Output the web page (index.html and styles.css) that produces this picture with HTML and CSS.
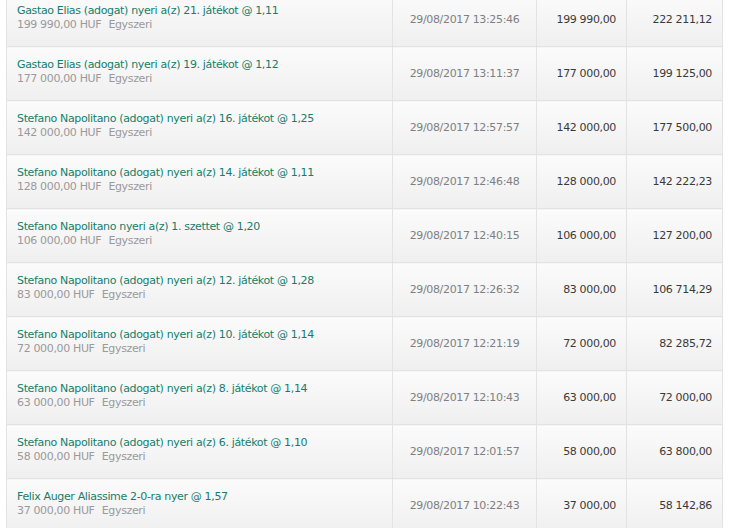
FILE: index.html
```html
<!DOCTYPE html>
<html lang="hu">
<head>
    <meta charset="UTF-8">
    <meta name="viewport" content="width=device-width, initial-scale=1.0">
    <title>Fogadások</title>
    <link rel="stylesheet" href="styles.css">
</head>
<body>
    <table class="bets">
        <colgroup>
            <col class="col-bet">
            <col class="col-date">
            <col class="col-stake">
            <col class="col-win">
        </colgroup>
        <tbody>
            <tr>
                <td class="bet">
                    <div class="bet-name">Gastao Elias (adogat) nyeri a(z) 21. játékot @ 1,11</div>
                    <div class="bet-info">199 990,00 HUF <span class="bet-type">Egyszeri</span></div>
                </td>
                <td class="date">29/08/2017 13:25:46</td>
                <td class="num">199 990,00</td>
                <td class="num">222 211,12</td>
            </tr>
            <tr>
                <td class="bet">
                    <div class="bet-name">Gastao Elias (adogat) nyeri a(z) 19. játékot @ 1,12</div>
                    <div class="bet-info">177 000,00 HUF <span class="bet-type">Egyszeri</span></div>
                </td>
                <td class="date">29/08/2017 13:11:37</td>
                <td class="num">177 000,00</td>
                <td class="num">199 125,00</td>
            </tr>
            <tr>
                <td class="bet">
                    <div class="bet-name">Stefano Napolitano (adogat) nyeri a(z) 16. játékot @ 1,25</div>
                    <div class="bet-info">142 000,00 HUF <span class="bet-type">Egyszeri</span></div>
                </td>
                <td class="date">29/08/2017 12:57:57</td>
                <td class="num">142 000,00</td>
                <td class="num">177 500,00</td>
            </tr>
            <tr>
                <td class="bet">
                    <div class="bet-name">Stefano Napolitano (adogat) nyeri a(z) 14. játékot @ 1,11</div>
                    <div class="bet-info">128 000,00 HUF <span class="bet-type">Egyszeri</span></div>
                </td>
                <td class="date">29/08/2017 12:46:48</td>
                <td class="num">128 000,00</td>
                <td class="num">142 222,23</td>
            </tr>
            <tr>
                <td class="bet">
                    <div class="bet-name">Stefano Napolitano nyeri a(z) 1. szettet @ 1,20</div>
                    <div class="bet-info">106 000,00 HUF <span class="bet-type">Egyszeri</span></div>
                </td>
                <td class="date">29/08/2017 12:40:15</td>
                <td class="num">106 000,00</td>
                <td class="num">127 200,00</td>
            </tr>
            <tr>
                <td class="bet">
                    <div class="bet-name">Stefano Napolitano (adogat) nyeri a(z) 12. játékot @ 1,28</div>
                    <div class="bet-info">83 000,00 HUF <span class="bet-type">Egyszeri</span></div>
                </td>
                <td class="date">29/08/2017 12:26:32</td>
                <td class="num">83 000,00</td>
                <td class="num">106 714,29</td>
            </tr>
            <tr>
                <td class="bet">
                    <div class="bet-name">Stefano Napolitano (adogat) nyeri a(z) 10. játékot @ 1,14</div>
                    <div class="bet-info">72 000,00 HUF <span class="bet-type">Egyszeri</span></div>
                </td>
                <td class="date">29/08/2017 12:21:19</td>
                <td class="num">72 000,00</td>
                <td class="num">82 285,72</td>
            </tr>
            <tr>
                <td class="bet">
                    <div class="bet-name">Stefano Napolitano (adogat) nyeri a(z) 8. játékot @ 1,14</div>
                    <div class="bet-info">63 000,00 HUF <span class="bet-type">Egyszeri</span></div>
                </td>
                <td class="date">29/08/2017 12:10:43</td>
                <td class="num">63 000,00</td>
                <td class="num">72 000,00</td>
            </tr>
            <tr>
                <td class="bet">
                    <div class="bet-name">Stefano Napolitano (adogat) nyeri a(z) 6. játékot @ 1,10</div>
                    <div class="bet-info">58 000,00 HUF <span class="bet-type">Egyszeri</span></div>
                </td>
                <td class="date">29/08/2017 12:01:57</td>
                <td class="num">58 000,00</td>
                <td class="num">63 800,00</td>
            </tr>
            <tr>
                <td class="bet">
                    <div class="bet-name">Felix Auger Aliassime 2-0-ra nyer @ 1,57</div>
                    <div class="bet-info">37 000,00 HUF <span class="bet-type">Egyszeri</span></div>
                </td>
                <td class="date">29/08/2017 10:22:43</td>
                <td class="num">37 000,00</td>
                <td class="num">58 142,86</td>
            </tr>
        </tbody>
    </table>
</body>
</html>
```

FILE: styles.css
```css
body {
    margin: 0;
    background-color: #fff;
    font-family: "DejaVu Sans", Verdana, sans-serif;
    font-size: 11px;
    letter-spacing: -0.35px;
    overflow: hidden;
}
.bets {
    margin: -8px 0 0 6px;
    width: 716px;
    table-layout: fixed;
    border-collapse: collapse;
}
.col-bet {
    width: 386px;
}
.col-date {
    width: 144px;
}
.col-stake {
    width: 90px;
}
.col-win {
    width: 96px;
}
.bets td {
    height: 53px;
    padding: 0 10px;
    border: 1px solid #e3e3e3;
    background: linear-gradient(#fbfbfb, #efefef);
    vertical-align: middle;
    white-space: nowrap;
}
.bets td.bet {
    height: 49px;
    padding-bottom: 4px;
}
.bet-name {
    line-height: 14px;
    color: #167d6b;
}
.bet-info {
    line-height: 14px;
    color: #9a9a9a;
}
.bet-type {
    margin-left: 4px;
}
.date {
    text-align: center;
    color: #808080;
}
.num {
    text-align: right;
    color: #3a3a3a;
}
```
